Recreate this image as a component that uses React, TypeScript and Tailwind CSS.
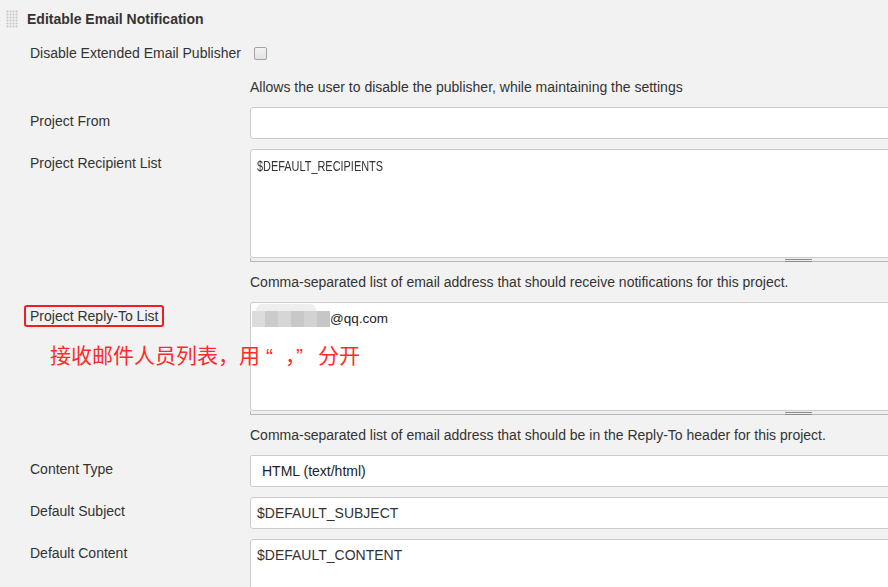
import type { ReactNode } from 'react';

const labelCls = 'w-[250px] shrink-0 pl-[30px] pt-[4px] leading-[20px]';

const Grip = () => (
	<svg width="12" height="18" viewBox="0 0 12 18" className="shrink-0">
		<rect width="12" height="18" fill="#fafafa" />
		{Array.from({ length: 6 }).map((_, r) =>
			Array.from({ length: 4 }).map((_, c) => (
				<rect
					key={`${r}-${c}`}
					x={c * 3 + 0.5}
					y={r * 3 + 0.5}
					width="2"
					height="2"
					fill="#c4c4c4"
				/>
			)),
		)}
	</svg>
);

const Row = ({
	label,
	children,
	className = '',
}: {
	label: ReactNode;
	children: ReactNode;
	className?: string;
}) => (
	<div className={`relative mb-[10px] flex ${className}`}>
		<div className={labelCls}>{label}</div>
		<div className="w-[660px] shrink-0">{children}</div>
	</div>
);

const Help = ({ children }: { children: ReactNode }) => (
	<div className="mb-[10px] h-[20px] pl-[250px] leading-[20px] whitespace-nowrap">
		{children}
	</div>
);

const TextBox = ({ value }: { value?: string }) => (
	<div className="flex h-[32px] items-center rounded-[3px] border border-[#cccccc] bg-white pl-[6px]">
		{value}
	</div>
);

const TextArea = ({
	children,
	height = 'h-[109px]',
	strip = true,
}: {
	children?: ReactNode;
	height?: string;
	strip?: boolean;
}) => (
	<div>
		<div
			className={`${height} rounded-[3px] border border-[#cccccc] bg-white px-[6px] pt-[7px] leading-[16px]`}
		>
			{children}
		</div>
		{strip && (
			<div className="relative h-[4px] border-b border-l border-[#b8b8b8] bg-[#efefef]">
				<div className="absolute top-[1px] left-[534px] h-[3px] w-[27px] border-y border-[#8a8a8a]" />
			</div>
		)}
	</div>
);

const BlurredName = () => (
	<span className="relative -ml-[5px] inline-flex h-[16px] w-[78px] align-middle blur-[0.6px]">
		<span className="w-[13px] bg-[#dcdcdc]" />
		<span className="w-[13px] bg-[#cbcbcb]" />
		<span className="w-[13px] bg-[#d6d6d6]" />
		<span className="w-[13px] bg-[#c8c8c8]" />
		<span className="w-[13px] bg-[#d2d2d2]" />
		<span className="w-[13px] bg-[#c6c6c6]" />
		<span className="absolute -top-[7px] left-[4px] h-[7px] w-[60px] rounded-t-[6px] bg-[#eeeeee]" />
	</span>
);

// red hand-written note laid over the form
const Note = () => (
	<div className="absolute top-[42px] left-[50px] flex items-baseline font-['Noto_Sans_CJK_SC',sans-serif] text-[21px] leading-[20px] whitespace-nowrap text-[#ff2a2a]">
		<span>接收邮件人员列表，用</span>
		<span className="ml-[6px] font-['Liberation_Sans',sans-serif]">“</span>
		<span className="ml-[12px] tracking-[-10px]">，</span>
		<span className="font-['Liberation_Sans',sans-serif]">”</span>
		<span className="ml-[15px]">分开</span>
	</div>
);

export default function App() {
	return (
		<div className="h-[587px] w-[888px] overflow-hidden bg-[#f2f2f2] font-['Liberation_Sans',Arial,sans-serif] text-[14px] text-[#333333]">
			<div className="flex h-[38px] items-center pl-[6px]">
				<Grip />
				<span className="ml-[9px] font-bold">Editable Email Notification</span>
			</div>

			<div className="flex h-[30px] items-center">
				<div className="w-[250px] shrink-0 pl-[30px]">
					Disable Extended Email Publisher
				</div>
				<span className="ml-[4px] h-[13px] w-[13px] rounded-[2px] border border-[#a3a3a3] bg-gradient-to-b from-[#f4f4f4] to-[#e2e2e2]" />
			</div>

			<div className="mt-[9px]">
				<Help>
					Allows the user to disable the publisher, while maintaining the
					settings
				</Help>
			</div>

			<Row label="Project From">
				<TextBox />
			</Row>

			<Row label="Project Recipient List" className="!mb-0">
				<TextArea>
					<span className="inline-block origin-left scale-x-[0.78] pt-[1px]">
						$DEFAULT_RECIPIENTS
					</span>
				</TextArea>
			</Row>
			<div className="mt-[10px]">
				<Help>
					Comma-separated list of email address that should receive
					notifications for this project.
				</Help>
			</div>

			<Row
				className="!mb-0"
				label={
					<span className="relative">
						Project Reply-To List
						<span className="absolute -top-[3px] -right-[6px] -bottom-[3px] -left-[6px] rounded-[3px] border-2 border-[#f01e1e]" />
					</span>
				}
			>
				<TextArea>
					<span className="flex items-center pt-[1px]">
						<BlurredName />
						<span className="text-[13.5px] text-[#222222]">@qq.com</span>
					</span>
				</TextArea>
				<Note />
			</Row>
			<div className="mt-[10px]">
				<Help>
					Comma-separated list of email address that should be in the
					Reply-To header for this project.
				</Help>
			</div>

			<Row label="Content Type">
				<div className="flex h-[32px] items-center rounded-[2px] border border-[#cccccc] bg-white pl-[11px] text-[#222222]">
					HTML (text/html)
				</div>
			</Row>

			<Row label="Default Subject">
				<TextBox value="$DEFAULT_SUBJECT" />
			</Row>

			<Row label="Default Content">
				<TextArea height="h-[120px]" strip={false}>
					$DEFAULT_CONTENT
				</TextArea>
			</Row>
		</div>
	);
}
